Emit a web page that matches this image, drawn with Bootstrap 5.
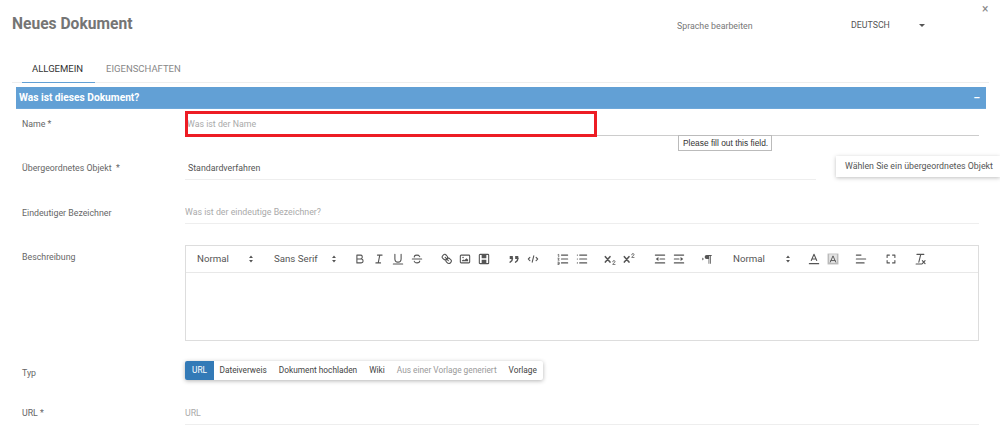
<!DOCTYPE html>
<html lang="de"><head><meta charset="utf-8"><title>Neues Dokument</title>
<link href="https://cdn.jsdelivr.net/npm/bootstrap@5.3.0/dist/css/bootstrap.min.css" rel="stylesheet">
<style>
html,body{height:438px;overflow:hidden;background:#fff}
body{font-family:Roboto,"Liberation Sans",sans-serif;font-size:8.8px;color:#666}
.pg{width:1000px;height:438px;overflow:hidden}
.hdr{height:62px;padding-left:12px}
.ttl{font-size:15.6px;font-weight:700;color:#757575;margin:0;line-height:18px;padding-top:15px}
.lang{width:174px;padding-top:20px;font-size:8.8px;color:#777;line-height:12px;margin-left:auto}
.sel{width:85px;padding-top:19px;font-size:8.8px;color:#555;line-height:12px}
.sel2{width:64px}
.caret-d{width:0;height:0;border:3px solid transparent;border-top:3px solid #555;border-bottom:0;margin:5px 0 0 -17px;display:block}
.cls{position:absolute;left:982px;top:3px;font-size:12px;line-height:12px;color:#888}
.tabz{margin:0 11px 0 12px;height:21px;border-bottom:1px solid #eee;padding-left:10px;flex-wrap:nowrap}
.tabz .nav-link{padding:0 10px;height:21px;line-height:13px;font-size:9.5px;color:#888;border-radius:0}
.tabz .nav-link.active{color:#333;border-bottom:1px solid #62a0d5;padding-right:12px;margin-right:1px}
.bar{margin:4px 14px 0 16px;height:22px;background:#62a0d5;color:#fff;font-weight:700;font-size:10.2px;padding:0 6px 0 3px;border-bottom:1px solid #6ea8da}
.frow{padding-left:22px;margin-top:20px}
.frow.first{margin-top:3px}
.frow.edrow{margin-top:21px}
.frow.urow{margin-top:21px}
.lbl{width:163px;flex:none;color:#666;line-height:12px}
.fld{width:794px;height:24px}
.fld.dark{border-bottom:1px solid #ccc}
.fld.lite{border-bottom:1px solid #eee}
.fld.short{width:631px}
.fld .form-control{border:0;border-radius:0;padding:0 0 0 2px;height:23px;font-size:8.8px;background:transparent;color:#555;box-shadow:none}
.fld .form-control.np{padding:1px 0 0 0}
.fld .form-control::placeholder{color:#aaa;opacity:1}
.fld.val .form-control{padding-left:3px}
.edt{width:794px;height:96px;border:1px solid #ddd}
.tbar{height:27px;border-bottom:1px solid #e8e8e8;color:#444;font-size:9.7px}
.pick{height:18px;padding:0 0 0 11px;color:#555}
.pick svg{margin-left:auto;margin-right:-1px}
.p1{width:71px}.p2{width:77px;margin-left:6px}.p3{width:72px;margin-left:6px}
.grp{gap:1px;margin-left:11px}
.grp.g10{margin-left:10px}.grp.g12{margin-left:12px}.grp.g13{margin-left:13px}
.grp svg{width:14px;height:14px;margin:0 2px}
.tbar svg{display:block;flex:none}
.pick svg{width:14px;height:14px}
.s{fill:none;stroke:#555;stroke-width:1.4;stroke-linecap:round;stroke-linejoin:round}
.t{stroke-width:1}
.h{stroke-width:2}
.m{stroke-width:1.2}
.b{stroke-width:1.900}
.f{fill:#555;stroke:none}
.bgrp{width:fit-content;box-shadow:0 1px 4px rgba(0,0,0,.3);border-radius:2px;height:19px;background:#fff}
.bgrp .btn{padding:0 6.5px;font-size:8.3px;line-height:19px;height:19px;border:0;border-radius:0;color:#444;white-space:nowrap}
.bgrp .btn.cur{background:#337ab7;color:#fff;border-radius:2px 0 0 2px;padding:0 7px}
.bgrp .btn.off{color:#999}
.lbl2{padding-top:6px}
.lbl3{padding-top:4px}
.lbl4{padding-top:2px}
.redbox{position:absolute;left:185px;top:111px;width:412px;height:26px;border:3px solid #ed1c24}
.tip{position:absolute;left:678px;top:135px;width:94px;height:16px;border:1px solid #bbb;background:#fff;font:8.4px/14px "Liberation Sans",sans-serif;color:#333;padding-left:4px;white-space:nowrap}
.pop{position:absolute;left:836px;top:156px;width:164px;height:21px;background:#fff;box-shadow:0 1px 4px rgba(0,0,0,.25);color:#555;line-height:21px;padding-left:9px;font-size:8.8px;white-space:nowrap}
</style></head><body>
<div class="pg position-relative">
 <div class="hdr d-flex">
  <h1 class="ttl">Neues Dokument</h1>
  <div class="lang">Sprache bearbeiten</div>
  <div class="sel">DEUTSCH</div>
  <div class="sel sel2 d-flex"><i class="caret-d"></i></div>
 </div>
 <div class="cls">×</div>
 <ul class="nav tabz">
  <li class="nav-item"><a class="nav-link active" href="#">ALLGEMEIN</a></li>
  <li class="nav-item"><a class="nav-link" href="#">EIGENSCHAFTEN</a></li>
 </ul>
 <div class="bar d-flex align-items-center justify-content-between"><span>Was ist dieses Dokument?</span><span>–</span></div>

 <div class="frow first d-flex align-items-center"><label class="lbl">Name *</label><div class="fld dark"><input class="form-control" placeholder="Was ist der Name"></div></div>
 <div class="frow d-flex align-items-center"><label class="lbl">Übergeordnetes Objekt &nbsp;*</label><div class="fld lite short val"><input class="form-control" value="Standardverfahren"></div></div>
 <div class="frow d-flex align-items-center"><label class="lbl lbl4">Eindeutiger Bezeichner</label><div class="fld lite"><input class="form-control np" placeholder="Was ist der eindeutige Bezeichner?"></div></div>
 <div class="frow edrow d-flex align-items-start"><label class="lbl lbl2">Beschreibung</label>
  <div class="edt">
   <div class="tbar d-flex align-items-center">
    <div class="pick p1 d-flex align-items-center">Normal<svg viewBox="0 0 18 18"><path class="f" d="M6.500 7.800L9 4.500l2.500 3.300zM6.500 10.200L9 13.500l2.500-3.300z"/></svg></div>
    <div class="pick p2 d-flex align-items-center">Sans Serif<svg viewBox="0 0 18 18"><path class="f" d="M6.500 7.800L9 4.500l2.500 3.300zM6.500 10.200L9 13.500l2.500-3.300z"/></svg></div>
    <div class="grp d-flex">
     <svg viewBox="0 0 18 18"><path class="s" d="M5 4h4.500a2.500 2.500 0 0 1 0 5H5zM5 9h5.500a2.500 2.500 0 0 1 0 5H5z"/></svg>
     <svg viewBox="0 0 18 18"><path class="s" d="M7 4h6M5 14h6M10 4L8 14"/></svg>
     <svg viewBox="0 0 18 18"><path class="s" d="M5 3v6a4 4 0 0 0 8 0V3M3 15.500h12"/></svg>
     <svg viewBox="0 0 18 18"><path class="s" d="M3 9h12M12.500 6C12 4.700 10.700 4 9 4 7 4 5.500 5 5.500 6.500M12.500 11.500C12.500 13 11 14 9 14c-1.700 0-3-.7-3.500-2"/></svg>
    </div>
    <div class="grp d-flex">
     <svg viewBox="0 0 18 18"><g transform="translate(1 0)"><path class="s" d="M7 7l4 4M8.900 4.600a3.500 3.500 0 0 1 .4 4.700 3.500 3.500 0 0 1-4.700-.4C3.200 7.500 2 6.400 4.200 4.200S7.500 3.200 8.900 4.600zM13.400 9.100a3.500 3.500 0 0 0-4.700-.4 3.500 3.500 0 0 0 .4 4.700c1.400 1.400 2.500 2.500 4.700.4s1-3.300-.4-4.700z"/></g></svg>
     <svg viewBox="0 0 18 18"><rect class="s" x="3" y="4" width="12" height="10" rx="1"/><circle class="f" cx="6.500" cy="7" r="1"/><path class="f" d="M5 12v-1l2-1.500 1 1 3-2.500 2 2v2z"/></svg>
     <svg viewBox="0 0 18 18"><rect class="s" x="3" y="3" width="12" height="12" rx="1"/><path class="f" d="M6 4h6v4H6zM6 10h6v4H6z"/></svg>
    </div>
    <div class="grp g12 d-flex">
     <svg viewBox="0 0 18 18"><path class="f" d="M3.500 5h4v4h-4zM10.500 5h4v4h-4z"/><path class="s b" d="M7 8c0 3.500-3 5-3 5M14 8c0 3.500-3 5-3 5"/></svg>
     <svg viewBox="0 0 18 18"><path class="s" d="M5 7L3 9l2 2M13 7l2 2-2 2M10 5l-2 8"/></svg>
    </div>
    <div class="grp g12 d-flex">
     <svg viewBox="0 0 18 18"><path class="s" d="M7 4h8M7 9h8M7 14h8"/><path class="s t" d="M2.500 3.500l1-.5v3M2.500 8h1.500L2.500 10.500H4M2.500 13h1.500v3h-1.500M2.500 14.500H4"/></svg>
     <svg viewBox="0 0 18 18"><path class="s" d="M6 4h9M6 9h9M6 14h9M3 4h.1M3 9h.1M3 14h.1"/></svg>
    </div>
    <div class="grp g10 d-flex">
     <svg viewBox="0 0 18 18"><path class="s h" d="M3 6l6 7M9 6l-6 7"/><path class="s t" d="M12.500 12.500a1.500 1.500 0 0 1 3 0c0 1.300-3 2-3 3.500h3"/></svg>
     <svg viewBox="0 0 18 18"><path class="s h" d="M3 6l6 7M9 6l-6 7"/><path class="s t" d="M12.500 3.500a1.500 1.500 0 0 1 3 0c0 1.300-3 2-3 3.500h3"/></svg>
    </div>
    <div class="grp g13 d-flex">
     <svg viewBox="0 0 18 18"><path class="s" d="M3 4h12M9 9h6M3 14h12"/><path class="f" d="M7 6.500v5L3.500 9z"/></svg>
     <svg viewBox="0 0 18 18"><path class="s" d="M3 4h12M3 9h6M3 14h12"/><path class="f" d="M11 6.500v5L14.500 9z"/></svg>
    </div>
    <div class="grp g10 d-flex">
     <svg viewBox="0 0 18 18"><path class="f" d="M3 7l2 2-2 2zM8.500 4H15v1h-1v10h-1V5h-1v10h-1V9H8.500a2.500 2.500 0 0 1 0-5z"/></svg>
    </div>
    <div class="pick p3 d-flex align-items-center">Normal<svg viewBox="0 0 18 18"><path class="f" d="M6.500 7.800L9 4.500l2.500 3.300zM6.500 10.200L9 13.500l2.500-3.300z"/></svg></div>
    <div class="grp d-flex">
     <svg viewBox="0 0 18 18"><path class="s" d="M5.500 11L9 3l3.500 8M6.400 9h5.200M3 15h12"/></svg>
     <svg viewBox="0 0 18 18"><rect x="2" y="2" width="14" height="14" fill="#bbb"/><rect x="4" y="3" width="10" height="11" fill="#e4e4e4"/><path class="s m" d="M5.500 13L9 5l3.500 8M6.400 11h5.200"/></svg>
    </div>
    <div class="grp g10 d-flex">
     <svg viewBox="0 0 18 18"><path class="s" d="M3 4h6M3 9h12M3 14h10"/></svg>
    </div>
    <div class="grp g12 d-flex">
     <svg viewBox="0 0 18 18"><path class="s" d="M4 7V4h3M11 4h3v3M14 11v3h-3M7 14H4v-3"/></svg>
    </div>
    <div class="grp d-flex">
     <svg viewBox="0 0 18 18"><path class="s" d="M5 3h9M10 3L7.500 13M4 15.500h7M12 11l3.500 4M15.500 11L12 15"/></svg>
    </div>
   </div>
  </div>
 </div>
 <div class="frow d-flex align-items-center"><label class="lbl lbl3">Typ</label>
  <div class="btn-group bgrp" role="group">
   <button type="button" class="btn cur">URL</button>
   <button type="button" class="btn">Dateiverweis</button>
   <button type="button" class="btn">Dokument hochladen</button>
   <button type="button" class="btn">Wiki</button>
   <button type="button" class="btn off">Aus einer Vorlage generiert</button>
   <button type="button" class="btn">Vorlage</button>
  </div>
 </div>
 <div class="frow urow d-flex align-items-center"><label class="lbl">URL *</label><div class="fld lite"><input class="form-control np" placeholder="URL"></div></div>

 <div class="redbox"></div>
 <div class="tip">Please fill out this field.</div>
 <div class="pop">Wählen Sie ein übergeordnetes Objekt</div>
</div>
</body></html>
